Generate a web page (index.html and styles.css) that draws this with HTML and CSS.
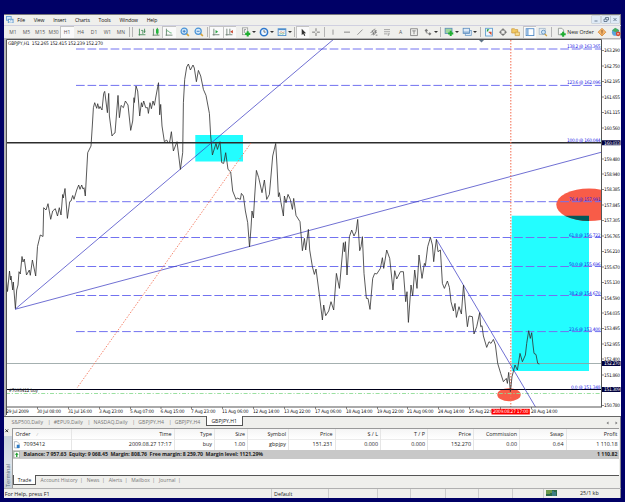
FILE: index.html
```
<!DOCTYPE HTML>
<html>
	<head>
		<meta charset="utf-8">
		<title>GBPJPY,H1</title>
		<link rel="stylesheet" href="styles.css">
	</head>

	<body>
		<div class="window">
			<div class="menubar">
				<svg class="logo" viewBox="0 0 8 8"><rect x="0.5" y="0.5" width="5" height="4" fill="#d6ebfa" stroke="#6aa5d8"/><rect x="2.5" y="3.5" width="5" height="4" fill="#fff" stroke="#5b97cf"/><path d="M3.5 6l1-1 1 .6 1-1" stroke="#2f78c0" stroke-width=".6" fill="none"/></svg>
				<span>File</span><span>View</span><span>Insert</span><span>Charts</span><span>Tools</span><span>Window</span><span>Help</span>
				<div class="winbuttons">
					<b><svg viewBox="0 0 8 7"><path d="M2.5 5h3"/></svg></b>
					<b><svg viewBox="0 0 8 7"><path d="M3.5 3V1.5h3v2.5H5.3M2 3.2h3v2.3H2z"/></svg></b>
					<b><svg viewBox="0 0 8 7"><path d="M2.5 2l3 3M5.5 2l-3 3"/></svg></b>
				</div>
			</div>

			<div class="toolbar">
				<div class="btn">M1</div><div class="btn">M5</div><div class="btn">M15</div><div class="btn">M30</div><div class="btn on">H1</div><div class="btn">H4</div><div class="btn">D1</div><div class="btn">W1</div><div class="btn">MN</div>
				<i class="sep double"></i>
				<div class="btn"><svg viewBox="0 0 14 12"><path d="M4 2v8M3 9h8M6 4h2v4M10 2v5M9 5h2" stroke="#3f8a54" fill="none"/></svg></div>
				<div class="btn"><svg viewBox="0 0 14 12"><path d="M4 2v8M3 9.5h8" stroke="#64806a" fill="none"/><path d="M8.5 1v8" stroke="#128a28"/><rect x="7" y="2.5" width="3" height="5" fill="#22b53b"/></svg></div>
				<div class="btn on"><svg viewBox="0 0 14 12"><path d="M4 2v8M3 9.5h8" stroke="#64806a" fill="none"/><path d="M4 5c2-2 3 2 6 2" stroke="#3aa055" fill="none"/></svg></div>
				<i class="gap"></i>
				<div class="btn"><svg viewBox="0 0 14 12"><path d="M8.5 7.5l3 3" stroke="#d6a63c" stroke-width="2"/><circle cx="6" cy="5" r="3.6" fill="#d5eafb" stroke="#4b94d6" stroke-width="1.4"/><path d="M4.3 5h3.4M6 3.3v3.4" stroke="#2f74bd"/></svg></div>
				<div class="btn"><svg viewBox="0 0 14 12"><path d="M8.5 7.5l3 3" stroke="#d6a63c" stroke-width="2"/><circle cx="6" cy="5" r="3.6" fill="#d5eafb" stroke="#4b94d6" stroke-width="1.4"/><path d="M4.3 5h3.4" stroke="#2f74bd"/></svg></div>
				<i class="sep s1"></i>
				<div class="btn on"><svg viewBox="0 0 14 12"><path d="M4.5 2v8M3 9h8" stroke="#6b7d70" fill="none"/><path d="M6.5 3.5v4l3-2z" fill="#2ba446"/></svg></div>
				<div class="btn on"><svg viewBox="0 0 14 12"><path d="M4.5 2v8M3 9h8M8 2v6" stroke="#6b7d70" fill="none"/><path d="M11.5 3.5v4l-3-2z" fill="#c8442c"/></svg></div>
				<i class="gap"></i>
				<div class="btn drop"><svg viewBox="0 0 14 12"><rect x="3" y="1" width="6" height="8" fill="#f4f4f4" stroke="#8a8f8c" stroke-width=".8"/><path d="M5 3v4M5 3h2" stroke="#777" stroke-width=".8"/><path d="M9 5v6M6 8h6" stroke="#1fae31" stroke-width="2.4"/></svg></div>
				<div class="btn drop"><svg viewBox="0 0 14 12"><circle cx="7" cy="6" r="4.2" fill="#eef7ff" stroke="#2f78cc" stroke-width="1.8"/><path d="M7 3.5V6h2" stroke="#444" stroke-width=".8" fill="none"/></svg></div>
				<div class="btn drop"><svg viewBox="0 0 14 12"><rect x="2.5" y="2" width="9" height="8" fill="#f5fbff" stroke="#4c8dcb"/><path d="M2.5 3h9" stroke="#4c8dcb" stroke-width="1.4"/><path d="M4 6.5l2-1 2 1 2-1" stroke="#c66b3c" stroke-width=".7" fill="none"/><path d="M4 8.5l2-.8 2 .6 2-1" stroke="#3a9c55" stroke-width=".7" fill="none"/></svg></div>
				<i class="sep s2"></i>
				<div class="btn on"><svg viewBox="0 0 14 12"><path d="M5.5 2v7.5l1.7-1.6 1.3 2.6 1.2-.6-1.3-2.5h2.2z" fill="#333"/></svg></div>
				<div class="btn"><svg viewBox="0 0 14 12"><path d="M7 1.5v3.5M7 7v3.5M2.5 6h3.5M8 6h3.5" stroke="#666"/></svg></div>
				<i class="sep s3"></i>
				<div class="btn"><svg viewBox="0 0 14 12"><path d="M7 3v6" stroke="#888"/></svg></div>
				<div class="btn"><svg viewBox="0 0 14 12"><path d="M3.5 6h7" stroke="#777"/></svg></div>
				<div class="btn"><svg viewBox="0 0 14 12"><path d="M4 9l6-6" stroke="#888"/></svg></div>
				<div class="btn"><svg viewBox="0 0 14 12"><path d="M3 7l5-5M4 9.5l6-6M6 9.5l4.5-4M5 4l2 5M8 3l1 4M9 9.5h2" stroke="#666" stroke-width=".9" fill="none"/></svg></div>
				<div class="btn"><svg viewBox="0 0 14 12"><path d="M3.5 3h7M3.5 5.5h7M3.5 8h4M8.5 7.5v3M8.5 8h2" stroke="#888" stroke-width=".8"/></svg></div>
				<div class="btn">A</div>
				<div class="btn"><svg viewBox="0 0 14 12"><path d="M3 2h8v8H3zM5 4.5h4M7 4.5v4" stroke="#777" stroke-width=".9" fill="none"/></svg></div>
				<div class="btn drop"><svg viewBox="0 0 14 12"><path d="M3 4l2-2 2 2-2 2zM7 8l2-2 2 2-2 2z" fill="#777"/><path d="M5 5v2h2" stroke="#777" fill="none" stroke-width=".8"/></svg></div>
				<i class="sep s2"></i>
				<div class="btn drop"><svg viewBox="0 0 14 12"><rect x="2.5" y="1.5" width="8" height="6" fill="#9ed69d" stroke="#5c90b8"/><path d="M9 4.5v6M6 7.5h6" stroke="#1fae31" stroke-width="2.3"/></svg></div>
				<div class="btn drop"><svg viewBox="0 0 14 12"><rect x="5" y="4" width="7" height="6" fill="#dceaf7" stroke="#6f9cc6" stroke-width=".9"/><rect x="2.5" y="1.5" width="7.5" height="6" fill="#dceaf7" stroke="#5689bd" stroke-width=".9"/><path d="M2.5 6h7.5" stroke="#5689bd"/></svg></div>
				<i class="sep s4"></i>
				<div class="btn"><svg viewBox="0 0 14 12"><rect x="3" y="1.5" width="8" height="9" fill="#eaf6ff" stroke="#5d9bce"/><path d="M4.5 6V2.5h3z" fill="#25a33c"/><path d="M6 5.5h4v4z" fill="#d34d2f"/></svg></div>
				<div class="btn"><svg viewBox="0 0 14 12"><circle cx="7" cy="6" r="3" fill="none" stroke="#666"/><path d="M7 1.5v3M7 7.5v3M2.5 6h3M8.5 6h3" stroke="#666"/></svg></div>
				<div class="btn"><svg viewBox="0 0 14 12"><path d="M2 2h3l1 1h3v4H2z" fill="#f3cb66" stroke="#c58e2b" stroke-width=".7"/><path d="M6 6h5v4H6z" fill="#f7dd8e" stroke="#c58e2b" stroke-width=".7"/></svg></div>
				<div class="btn on"><svg viewBox="0 0 14 12"><rect x="2.5" y="2" width="9" height="8" fill="#fff" stroke="#4b86c4"/><path d="M4.5 2v8" stroke="#6da2d6" stroke-width="1.5"/></svg></div>
				<div class="btn"><svg viewBox="0 0 14 12"><rect x="2.5" y="1.5" width="7" height="7" fill="#e6eef5" stroke="#9ab0c3" stroke-width=".8"/><circle cx="7.5" cy="6" r="2.3" fill="#cfe4f6" stroke="#5c8fbd"/><path d="M9 8l2.5 2.5" stroke="#cda043" stroke-width="1.5"/></svg></div>
				<i class="sep s5"></i>
				<div class="btn"><svg viewBox="0 0 14 12"><path d="M4 1.5h4l2 2V9H4z" fill="#f6f6f6" stroke="#7d8580" stroke-width=".8"/><path d="M9.5 5.5v6M6.5 8.5h6" stroke="#1fae31" stroke-width="2.4"/></svg></div>
				<span class="neworder">New Order</span>
				<div class="btn"><svg viewBox="0 0 14 12"><path d="M7 1.5L11.5 6 7 10.5 2.5 6z" fill="#f5b66c" stroke="#d68b3c"/><path d="M7 3.5v3.3M7 7.5v1" stroke="#7a4416"/></svg></div>
				<div class="btn"><svg viewBox="0 0 14 12"><circle cx="6.5" cy="6" r="4.3" fill="#5ba4dc"/><path d="M2.5 4.5L6 1l5 3-4 2z" fill="#48ad5c"/><circle cx="9.5" cy="8" r="2.7" fill="#d5492b"/><path d="M8.3 8h2.4" stroke="#fff"/></svg></div>
			</div>

			<svg class="chart" viewBox="4 38 617 378" width="617" height="378">
				<defs>
					<clipPath id="plot"><rect x="6" y="40" width="595" height="367"/></clipPath>
					<clipPath id="zone"><rect x="511.7" y="215.7" width="77.3" height="155.3"/></clipPath>
				</defs>
				<rect x="4" y="38" width="617" height="378" fill="#fff"/>
				<path d="M5 416V38.5H621" stroke="#b5b5b5" stroke-width="2" fill="none"/>

				<g clip-path="url(#plot)">
					<rect class="cyan" x="195.3" y="135" width="47.7" height="26.5"/>
					<rect class="cyan" x="511.7" y="215.7" width="77.3" height="155.3"/>
					<ellipse class="red" cx="589" cy="204.8" rx="32.7" ry="16.3"/>
					<ellipse cx="589" cy="204.8" rx="32.7" ry="16.3" fill="#00595a" clip-path="url(#zone)"/>
					<ellipse class="red" cx="509" cy="394.7" rx="11.7" ry="6.5"/>

					<path class="fibo" d="M76 49H601M76 85.4H601M76 201.7H601M76 237.5H601M76 266.5H601M76 295.5H601M76 331.6H601"/>
					<path class="bid" d="M6 363.5H601"/>
					<path class="entry" d="M6 393.5H601"/>
					<path class="level" d="M6 142.8H601"/>
					<path class="level low" d="M6 389.5H601"/>
					<path class="trend" d="M15 309.3L333 39.8M15 309.3L601 152.3M436.5 239.5L535.5 407"/>
					<path class="dots" d="M251 143L77 388"/>
					<path class="dots vert" d="M510.8 40V407"/>

					<polyline class="price" points="6.3,279 7.5,291.5 9.5,271 10.5,280 11,276 12.7,290 13.3,282 15.4,308.5 16.7,290 18,285 19,271.7 20.3,274 22,256.5 23,262 24.3,259 26.5,275 29.3,270 30.3,275.3 32.4,260 35.7,276 37.5,246.5 40.3,235 43,236.5 43.7,207.7 46,210 48,203.7 50.7,219.3 52.7,211 55.3,208.7 57.5,216 59.3,207.7 61,215 62.7,194.5 63.3,198 65,188.5 67.4,218.4 69.7,201.7 71,201 72.7,195.5 74,199.3 76.7,190 78.7,185 80,189.3 81.7,185 83,189 84,187.7 85.3,196 87.7,152.7 91,146 92.3,126 93.4,107.7 94.7,102.7 96.7,108.3 97.7,103.7 99,108.7 100,106.5 102,110 103.7,93.4 104.7,91.4 107.4,112.7 108.7,93.4 109.4,116 112,136 113.7,133.7 115,133 118,95.4 119.4,117.7 121,105.4 123.4,107.7 125.4,101 128,105 130.7,130.4 132.7,121 134,97.7 134.4,102.5 136,86 137.7,91 139.7,116 141.4,102.7 142.3,107 143.7,101 145.7,107.7 147.6,107.7 148.4,113.4 150,102.7 151.4,108.7 153,101 154.4,105.3 156,96 158.5,82.7 159.7,114.8 160.7,104.4 162,126 164.4,141.7 166.7,140 168,142.7 169.7,142 171.4,131.7 173.4,151 177,141.7 180.4,169.4 182.7,152.7 183.4,102.7 184.7,79.4 186.7,67 188.4,64 190.4,70 193,65 194.3,68 196.4,81.7 198.4,70.4 200.7,76 203.4,89.4 206,95.4 209.4,113.4 210.7,136 212.4,155 216,143.4 217.4,149.4 220,141.7 221.7,162.7 223.7,163.4 225.7,152.7 228,169.4 230.7,172 232.7,191 236,199.4 237.3,198 240.4,199.4 241.4,193.4 243.4,196 245.4,211 247.7,222.7 249.5,247 251,228 252,211 253.4,218 254.7,196 256.4,170.4 258.7,177.7 262,192.7 264.4,180 266.7,199.4 269.4,194.4 272.7,156 275.7,143.4 277,166 278.4,196.7 279.4,192.7 281,202.7 283.4,216 284.4,196 286,202.7 288,194.4 290.3,199.4 292.4,209.4 293.7,198.4 296,215.4 300,221.7 302.4,250.7 304.4,238.4 305.7,250 308.4,229.4 309.7,250 312.4,266.7 314.4,274.4 316,269 319.4,295 322.4,320 323.7,305 325.7,315.7 328.7,311 331,301.7 333.7,310 336.4,273.4 339.4,288.4 341.4,265 343.4,242.7 344.4,251.7 345.4,241.7 347,275 349.4,236.7 351.7,230 354,236 356,231.7 357.7,219.4 359.7,250.7 361,246.7 362.4,236.7 364,273.4 366.4,298.4 368,298.4 370,309.4 372.7,278.4 374.7,273.4 376.7,274 380.4,268.4 382.4,257.7 383.7,268.4 386.7,250 389.7,258.4 393,290 394.7,270.7 396.7,279 400.4,271.7 403.4,271.7 405.7,301.7 407,291.7 408.4,322.4 411,285 412.7,296 414.7,270 417,288.4 419,255 422,278.4 424.4,263.4 425.4,265.7 427.7,246.7 430.4,237.4 432.4,245 433.7,261.7 435,250 436.4,239.4 438,251.7 440.4,250 442.4,283.4 444.4,288.4 447.4,281 449.4,287.4 451,301.7 453.4,311 455,303.4 456.4,317.4 459,306.7 461.4,314 463.5,285 465.7,310 467.4,326.7 469,316 472.4,316.7 474,334 476.7,326.7 479.7,312.7 480.7,326.7 482,325.7 483.4,336 486.7,347.4 489,341.7 491,343.4 493.4,339.4 495.4,345 497.7,363.4 500.7,373.4 503.4,381.7 506.3,378.4 507.4,383.4 508.7,372.4 510.4,391.7 512,376.7 515,365 517.4,370 520,353.4 522.4,361.7 525.4,355 526.7,343.4 528.7,330.7 530.3,338.4 531.7,332.7 533,345 534,353.4 536,354.5 537.7,363.4 539.4,364"/>
				</g>
				<path d="M479 40h5l-2.500 2.500z" fill="#5f7488"/>

				<path class="frame" d="M6.5 415V39.5H601.5V407M6 407H602"/>
				<path class="ticks" d="M602 50.5h2M602 66h2M602 81.5h2M602 97h2M602 112.5h2M602 128h2M602 159h2M602 174h2M602 189.5h2M602 205h2M602 220.5h2M602 236h2M602 251.5h2M602 267h2M602 282.5h2M602 298h2M602 313h2M602 328.5h2M602 344h2M602 359h2M602 375h2M602 405.5h2"/>
				<path class="ticks" d="M6.5 407v2M37.5 407v2M68.5 407v2M99.5 407v2M130.5 407v2M161 407v2M191.5 407v2M222.5 407v2M253.5 407v2M284.5 407v2M315.5 407v2M346.5 407v2M377.5 407v2M407.5 407v2M438.5 407v2M469.5 407v2M500.5 407v2M531.5 407v2"/>

				<text class="small" x="8" y="45.3" textLength="95" xml:space="preserve">GBPJPY,H1  152.265 152.415 152.239 152.270</text>
				<text class="small" x="8.5" y="392.3" textLength="29.5">#7093412 buy</text>

				<g class="small blue">
					<text x="567" y="47.6" textLength="33.5">138.2 @ 163.365</text>
					<text x="567" y="84" textLength="33.5">123.6 @ 162.096</text>
					<text x="567" y="141.8" textLength="33.5">100.0 @ 160.044</text>
					<text x="569" y="200.5" textLength="31.5">76.4 @ 157.991</text>
					<text x="569" y="236.5" textLength="31.5">61.8 @ 156.722</text>
					<text x="569" y="265.6" textLength="31.5">50.0 @ 155.696</text>
					<text x="569" y="294.6" textLength="31.5">38.2 @ 154.670</text>
					<text x="569" y="330.7" textLength="31.5">23.6 @ 153.400</text>
					<text x="571" y="388.6" textLength="29.5">0.0 @ 151.348</text>
				</g>

				<g class="small">
					<text x="604" y="52.3" textLength="16">163.290</text>
					<text x="604" y="67.8" textLength="16">162.750</text>
					<text x="604" y="83.3" textLength="16">162.195</text>
					<text x="604" y="98.8" textLength="16">161.655</text>
					<text x="604" y="114.3" textLength="16">161.115</text>
					<text x="604" y="129.8" textLength="16">160.560</text>
					<text x="604" y="160.8" textLength="16">159.480</text>
					<text x="604" y="175.8" textLength="16">158.940</text>
					<text x="604" y="191.3" textLength="16">158.385</text>
					<text x="604" y="206.8" textLength="16">157.845</text>
					<text x="604" y="222.3" textLength="16">157.305</text>
					<text x="604" y="237.8" textLength="16">156.765</text>
					<text x="604" y="253.3" textLength="16">156.210</text>
					<text x="604" y="268.8" textLength="16">155.670</text>
					<text x="604" y="284.3" textLength="16">155.130</text>
					<text x="604" y="299.8" textLength="16">154.590</text>
					<text x="604" y="314.8" textLength="16">154.035</text>
					<text x="604" y="330.3" textLength="16">153.495</text>
					<text x="604" y="345.8" textLength="16">152.955</text>
					<text x="604" y="360.8" textLength="16">152.400</text>
					<text x="604" y="376.8" textLength="16">151.860</text>
					<text x="604" y="407.3" textLength="16">150.780</text>
				</g>
				<path d="M602 140.300h18.500v5H602zM602 361h18.500v5H602zM602 387h18.500v5H602z" fill="#00003c"/>
				<g class="small white">
					<text x="604" y="144.6" textLength="16">160.033</text>
					<text x="604" y="365.3" textLength="16">152.270</text>
					<text x="604" y="391.3" textLength="16">151.309</text>
				</g>

				<g class="small">
					<text x="6.3" y="413.4" textLength="22.5">29 Jul 2009</text>
					<text x="37" y="413.4" textLength="24">30 Jul 08:00</text>
					<text x="68" y="413.4" textLength="24">31 Jul 16:00</text>
					<text x="99" y="413.4" textLength="24">3 Aug 23:00</text>
					<text x="130" y="413.4" textLength="24">5 Aug 07:00</text>
					<text x="160.5" y="413.4" textLength="24">6 Aug 15:00</text>
					<text x="191" y="413.4" textLength="24.5">7 Aug 23:00</text>
					<text x="222" y="413.4" textLength="26.5">11 Aug 06:00</text>
					<text x="253" y="413.4" textLength="26.5">12 Aug 14:00</text>
					<text x="284" y="413.4" textLength="26.5">13 Aug 22:00</text>
					<text x="315" y="413.4" textLength="26.5">17 Aug 06:00</text>
					<text x="346" y="413.4" textLength="26.5">18 Aug 14:00</text>
					<text x="377" y="413.4" textLength="26.5">19 Aug 22:00</text>
					<text x="407" y="413.4" textLength="26.5">21 Aug 06:00</text>
					<text x="438" y="413.4" textLength="26.5">24 Aug 14:00</text>
					<text x="469" y="413.4" textLength="26.5">25 Aug 22:00</text>
					<text x="531" y="413.4" textLength="26.5">28 Aug 14:00</text>
				</g>
				<rect x="491.5" y="408.8" width="38.3" height="5.7" fill="#f00"/>
				<text class="small white" x="493" y="413.4" textLength="35.5">2009.08.27 17:00</text>
			</svg>

			<div class="charttabs">
				<span>S&amp;P500,Daily</span><span>#EPU9,Daily</span><span>NASDAQ,Daily</span><span>GBPJPY,H4</span><span>GBPJPY,H4</span>
				<div class="active">GBPJPY,H1</div>
				<div class="arrows"><svg viewBox="0 0 14 6"><path d="M3.5 1.5v3L1.5 3zM10.5 1.5v3l2-1.5z"/></svg></div>
			</div>

			<div class="terminal">
				<div class="side">
					<svg viewBox="0 0 6 6"><path d="M1.5 1.5l3 3M4.5 1.5l-3 3" stroke="#222"/></svg>
					<div class="vertical">Terminal</div>
				</div>
				<div class="panel">
					<div class="row head">
						<div class="order">Order <em>/</em></div><div>Time</div><div>Type</div><div>Size</div><div>Symbol</div><div>Price</div><div>S / L</div><div>T / P</div><div>Price</div><div>Commission</div><div>Swap</div><div>Profit</div>
					</div>
					<div class="row">
						<div class="order"><svg viewBox="0 0 8 8"><path d="M1.5 .7h3l2 2v4.6h-5z" fill="#fff" stroke="#8a96a3" stroke-width=".7"/><path d="M4 4h3v3.5H4z" fill="#2c7cc8"/></svg>7093412</div><div>2009.08.27 17:17</div><div>buy</div><div>1.00</div><div>gbpjpy</div><div>151.231</div><div>0.000</div><div>0.000</div><div>152.270</div><div>0.00</div><div>0.64</div><div>1 110.18</div>
					</div>
					<div class="balance">
						<svg viewBox="0 0 8 8"><rect x="1" y=".7" width="6" height="6.6" fill="#fff" stroke="#8c9a8c" stroke-width=".7"/><path d="M4 1.7l2 2.3H4.7v2.3H3.3V4H2z" fill="#1a9d2c"/></svg>
						<span class="sum">Balance: 7 957.63&nbsp; Equity: 9 068.45&nbsp; Margin: 808.76&nbsp; Free margin: 8 259.70&nbsp; Margin level: 1121.29%</span>
						<span class="total">1 110.82</span>
					</div>
					<div class="empty"></div>
					<div class="bottomtabs">
						<div class="active">Trade</div>
						<span>Account History</span><span>News</span><span>Alerts</span><span>Mailbox</span><span>Journal</span>
					</div>
				</div>
			</div>

			<div class="status">
				<div class="help">For Help, press F1</div>
				<div class="profile">Default</div>
				<div class="c1"></div><div class="c2"></div><div class="c3"></div><div class="c4"></div><div class="c5"></div><div class="c6"></div>
				<div class="traffic">
					<svg viewBox="0 0 11 6"><rect width="11" height="6" fill="#2c6a48"/><path d="M1 0v4M3 0v4M5 0v3" stroke="#a9c64c"/><path d="M7 1v5M9 2v4" stroke="#4f8fc0"/></svg>
					25/1 kb
				</div>
			</div>
		</div>
	</body>
</html>
```
FILE: styles.css
```
body {
	margin: 0;
	background-color: #000066;
	font-family: "Open Sans", "Noto Sans", sans-serif;
	font-size: 5.4px;
	color: #222;
	overflow: hidden;
}

svg {
	display: block;
}

.window {
	width: 617px;
	height: 484px;
	margin: 14px 0 0 4px;
	background-color: #efefec;
	box-shadow: inset 0 1px 0 #77777c, inset -1px 0 0 #88888c;
	overflow: hidden;
}

.menubar {
	display: flex;
	align-items: center;
	height: 11px;
	padding-left: 2px;
	gap: 8.8px;
	font-size: 5.1px;
	line-height: 10px;
	letter-spacing: -0.12px;
	color: #111;
	box-sizing: border-box;
}

.logo {
	width: 7.5px;
	height: 7.5px;
	margin-right: -5px;
}

.winbuttons {
	display: flex;
	gap: 1.5px;
	margin-left: auto;
	padding-right: 2px;
}

.winbuttons b {
	width: 8px;
	height: 7px;
	background-color: #dfeaf6;
	box-shadow: 0 0 0 0.5px #aebccb;
}

.winbuttons path {
	fill: none;
	stroke: #50677f;
	stroke-width: 0.8;
}

.toolbar {
	display: flex;
	align-items: center;
	height: 13px;
	padding-left: 2.25px;
	font-size: 5px;
	color: #555;
	border-top: 1px solid #d0d0e0;
	box-sizing: border-box;
}

.btn {
	flex: none;
	width: 13.5px;
	height: 11.5px;
	line-height: 12px;
	text-align: center;
}

.btn svg {
	width: 12px;
	height: 10.3px;
	margin: 0.6px auto;
}

.btn.on {
	background-color: #fafafa;
	box-shadow: inset 1px 1px 0 #c4c4c4;
}

.drop {
	display: flex;
	align-items: center;
	width: 18px;
}

.drop svg {
	margin: 0 0 0 1px;
}

.drop:after {
	content: "";
	margin-left: 0.2px;
	border: 1.5px solid transparent;
	border-width: 2px 2px 0;
	border-top-color: #333;
}

.sep {
	flex: none;
	height: 10px;
	width: 3.5px;
	background: linear-gradient(#b4b4b4, #b4b4b4) center / 1px 100% no-repeat;
}

.double {
	width: 7.5px;
	background: linear-gradient(90deg, transparent 1px, #b4b4b4 1px, #b4b4b4 2px, transparent 2px, transparent 4px, #b4b4b4 4px, #b4b4b4 5px, transparent 5px);
}

.s1 { width: 3.75px; }
.s2 { width: 3.25px; }
.s4 { width: 4.25px; }
.s5 { width: 4px; }

.gap {
	flex: none;
	width: 2.5px;
}

.neworder {
	flex: none;
	width: 28px;
	font-size: 5.2px;
	color: #222;
	white-space: nowrap;
}

.cyan { fill: #23fdff; }
.red { fill: #f85c48; }

.fibo {
	stroke: #7272f0;
	stroke-width: 1;
	stroke-dasharray: 8.7 2.83;
}

.bid {
	stroke: #8d9c9c;
	stroke-width: 0.8;
}

.entry {
	stroke: #8fdc95;
	stroke-width: 0.9;
	stroke-dasharray: 4 1.8 1.2 1.8;
}

.level {
	stroke: #2c2c2c;
	stroke-width: 1.6;
}

.low {
	stroke: #000018;
	stroke-width: 1.1;
}

.trend {
	stroke: #4040c4;
	stroke-width: 0.75;
	fill: none;
}

.dots {
	stroke: #f4775c;
	stroke-width: 0.9;
	stroke-dasharray: 1.5 1.5;
}

.vert {
	stroke-width: 1.1;
}

.price {
	fill: none;
	stroke: #2e2e2e;
	stroke-width: 0.8;
}

.frame {
	fill: none;
	stroke: #555;
	stroke-width: 1;
}

.ticks {
	stroke: #555;
	stroke-width: 0.7;
}

.small {
	font-family: "DejaVu Sans Condensed", "DejaVu Sans", sans-serif;
	font-size: 4.8px;
	fill: #111;
}

.blue { fill: #2222e6; }
.white { fill: #fff; }

.charttabs {
	display: flex;
	height: 11.5px;
	padding-left: 2px;
	line-height: 10px;
	font-size: 5.15px;
	color: #777;
	border-top: 1px solid #666;
	box-sizing: border-box;
}

.charttabs span {
	padding: 0 5.4px;
	position: relative;
}

.charttabs span + span:before,
.bottomtabs span:after {
	content: "|";
	position: absolute;
	left: -0.7px;
}

.charttabs .active {
	width: 37px;
	height: 10px;
	margin-top: -1px;
	line-height: 11px;
	text-align: center;
	color: #222;
	background-color: #fff;
	border: 1px solid #555;
	border-top: 0;
	box-sizing: border-box;
}

.arrows {
	margin-left: auto;
	padding: 2.5px 2px 0 0;
}

.arrows svg {
	width: 14px;
	height: 6px;
	fill: #777;
}

.terminal {
	display: flex;
	height: 60px;
}

.side {
	display: flex;
	flex-direction: column;
	justify-content: space-between;
	width: 8px;
	background: linear-gradient(#efefec 8px, #c9d2dc 8px, #dde2e8 36px, #c4ccd4);
}

.side svg {
	width: 5.5px;
	height: 5.5px;
}

.vertical {
	writing-mode: vertical-rl;
	transform: rotate(180deg);
	line-height: 8px;
	font-size: 5.6px;
	color: #56687c;
}

.panel {
	flex: 1;
	margin-right: 2px;
	border-left: 1px solid #999;
	border-top: 1px solid #999;
	background-color: #fff;
}

.row {
	display: grid;
	grid-template-columns: 59px 102.5px 40.5px 33px 41px 46.5px 45.5px 47px 46px 46px 46.5px 1fr;
	height: 9.5px;
	line-height: 9.5px;
	text-align: right;
}

.row div {
	padding-right: 2px;
	border-right: 1px solid #e6e6e6;
	white-space: nowrap;
}

.row div:last-child {
	border-right: 0;
	padding-right: 1.5px;
}

.head {
	height: 11.5px;
	line-height: 11.5px;
	background: linear-gradient(#f5f5f5, #fff);
	border-bottom: 1px solid #ececec;
	box-sizing: border-box;
}

.row .order {
	display: flex;
	align-items: center;
	text-align: left;
	padding-left: 0;
}

.row.head .order {
	padding-left: 2.5px;
}

.order em {
	margin-left: 6px;
	font-size: 4px;
	color: #aaa;
}

.order svg,
.balance svg {
	width: 7.5px;
	height: 7.5px;
	margin-right: 3px;
}

.balance {
	display: flex;
	align-items: center;
	height: 9.5px;
	font-weight: bold;
	line-height: 9.5px;
	background-color: #c8c8c8;
	color: #222;
}

.sum {
	white-space: nowrap;
	font-size: 5.2px;
	letter-spacing: -0.06px;
}

.total {
	margin-left: auto;
	padding-right: 1.5px;
	font-size: 5.2px;
}

.empty {
	height: 17px;
	border-bottom: 1px solid #555;
	box-sizing: border-box;
}

.bottomtabs {
	display: flex;
	height: 11.5px;
	line-height: 9px;
	font-size: 5px;
	background-color: #efefec;
	color: #777;
}

.bottomtabs .active {
	width: 23px;
	height: 9.5px;
	margin: -1px 0 0 0;
	padding-top: 1px;
	line-height: 8.5px;
	text-align: center;
	color: #222;
	background-color: #fff;
	border: 1px solid #555;
	border-top: 0;
	box-sizing: border-box;
}

.bottomtabs span {
	position: relative;
	padding: 0 4.6px;
}

.bottomtabs span:after {
	left: auto;
	right: -0.7px;
}

.status {
	display: flex;
	height: 10.5px;
	line-height: 10px;
	border-top: 1px solid #b0b0b0;
	box-sizing: border-box;
}

.status div {
	border-left: 1px solid #ccc;
	box-sizing: border-box;
	padding-left: 2px;
}

.status .help {
	width: 267px;
	border: 0;
	padding-left: 0.7px;
}

.profile { width: 56.5px; }
.c1 { width: 49px; }
.c2 { width: 33.5px; }
.c3 { width: 34.5px; }
.c4 { width: 33px; }
.c5 { width: 34px; }
.c6 { width: 31.5px; }

.traffic {
	display: flex;
	align-items: center;
	gap: 23px;
}

.traffic svg {
	width: 11px;
	height: 6px;
}
```
